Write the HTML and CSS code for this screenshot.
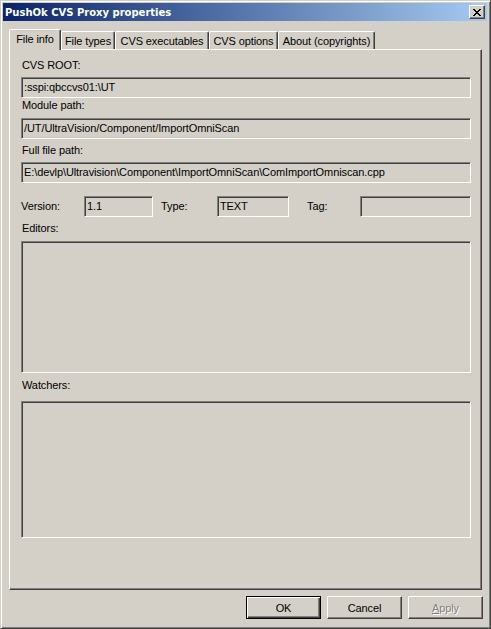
FILE: index.html
```html
<html>
<head>
<meta http-equiv="Content-Type" content="text/html; charset=UTF-8">
<title>PushOk CVS Proxy properties</title>
<link rel="stylesheet" href="styles.css">
</head>
<body>
<div class="window">
  <div class="caption">
    <span class="caption-text">PushOk CVS Proxy properties</span>
    <span class="caption-btn">
      <svg width="8" height="7" viewBox="0 0 8 7" shape-rendering="crispEdges">
        <path fill="#000" d="M0 0h2v1h-2z M6 0h2v1h-2z M1 1h2v1h-2z M5 1h2v1h-2z M2 2h4v1h-4z M3 3h2v1h-2z M2 4h4v1h-4z M1 5h2v1h-2z M5 5h2v1h-2z M0 6h2v1h-2z M6 6h2v1h-2z"/>
      </svg>
    </span>
  </div>

  <div class="tabs">
    <div class="tab active w1">File info</div>
    <div class="tab w2">File types</div>
    <div class="tab w3">CVS executables</div>
    <div class="tab w4">CVS options</div>
    <div class="tab w5">About (copyrights)</div>
  </div>

  <div class="sheet">
    <div class="label first">CVS ROOT:</div>
    <div class="edit e1">:sspi:qbccvs01:\UT</div>

    <div class="label l2">Module path:</div>
    <div class="edit e2">/UT/UltraVision/Component/ImportOmniScan</div>

    <div class="label l3">Full file path:</div>
    <div class="edit e3">E:\devlp\Ultravision\Component\ImportOmniScan\ComImportOmniscan.cpp</div>

    <div class="row">
      <span class="rlabel version">Version:</span>
      <span class="edit small ver">1.1</span>
      <span class="rlabel type">Type:</span>
      <span class="edit small typ">TEXT</span>
      <span class="rlabel tag">Tag:</span>
      <span class="edit small tg"></span>
    </div>

    <div class="label l4">Editors:</div>
    <div class="list editors"></div>

    <div class="label l5">Watchers:</div>
    <div class="list watchers"></div>
  </div>

  <div class="buttons">
    <div class="btn default">OK</div>
    <div class="btn">Cancel</div>
    <div class="btn disabled"><u>A</u>pply</div>
  </div>
</div>
</body>
</html>
```

FILE: styles.css
```css
BODY
{
  margin: 0;
  padding: 0;
  background: #d4d0c8;
  font-family: "Liberation Sans", Arial, sans-serif;
  font-size: 11px;
  letter-spacing: -0.1px;
  color: #000;
}

/* outer dialog frame */
.window {
  box-sizing: border-box;
  width: 491px;
  height: 629px;
  padding: 2px;
  background: #d4d0c8;
  border: 1px solid;
  border-color: #d4d0c8 #404040 #404040 #d4d0c8;
  box-shadow: inset 1px 1px #fff, inset -1px -1px #808080;
}

/* title bar */
.caption {
  height: 18px;
  display: flex;
  align-items: center;
  justify-content: space-between;
  padding: 0 2px 0 2px;
  margin-right: 1px;
  background: linear-gradient(to right, #0a246a, #a6caf0);
}
.caption-text {
  color: #fff;
  font-family: "DejaVu Sans", Verdana, sans-serif;
  font-weight: bold;
  font-size: 10px;
  letter-spacing: 0;
}
.caption-btn {
  box-sizing: border-box;
  width: 16px;
  height: 14px;
  display: flex;
  align-items: center;
  justify-content: center;
  background: #d4d0c8;
  border: 1px solid;
  border-color: #fff #404040 #404040 #fff;
  box-shadow: inset -1px -1px #808080;
}

/* tab strip */
.tabs {
  display: flex;
  align-items: flex-start;
  margin: 8px 6px 0 6px;
  height: 20px;
  position: relative;
  z-index: 1;
}
.tab {
  box-sizing: border-box;
  height: 18px;
  margin-top: 2px;
  display: flex;
  align-items: center;
  justify-content: center;
  background: #d4d0c8;
  border-top: 1px solid #fff;
  border-left: 1px solid #fff;
  border-right: 1px solid #404040;
  box-shadow: inset -1px 0 #808080;
  border-radius: 2px 2px 0 0;
  white-space: nowrap;
}
.tab.active {
  height: 21px;
  margin-top: 0;
  padding-bottom: 3px;
}
.w1 { width: 52px; }
.w2 { width: 54px; }
.w3 { width: 94px; }
.w4 { width: 69px; }
.w5 { width: 97px; }

/* property page */
.sheet {
  box-sizing: border-box;
  height: 541px;
  margin: 0 6px;
  padding: 9px 10px 0 11px;
  border: 1px solid;
  border-color: #fff #404040 #404040 #fff;
  box-shadow: inset -1px -1px #808080;
}

.label {
  line-height: 13px;
  padding-left: 1px;
}
.l2 { margin-top: 1px; }
.l3 { margin-top: 5px; }
.l4 { margin-top: 5px; }
.l5 { margin-top: 6px; }

/* read-only edit boxes */
.edit {
  box-sizing: border-box;
  height: 21px;
  line-height: 19px;
  padding-left: 2px;
  border: 1px solid;
  border-color: #808080 #fff #fff #808080;
  box-shadow: inset 1px 1px #404040, inset -1px -1px #d4d0c8;
  white-space: nowrap;
  overflow: hidden;
}
.e1 { margin-top: 5px; }
.e2 { margin-top: 6px; }
.e3 { margin-top: 5px; }

.row {
  display: flex;
  align-items: center;
  margin-top: 13px;
  height: 21px;
}
.rlabel { line-height: 13px; }
.version { width: 63px; }
.type { width: 56px; margin-left: 8px; }
.tag { width: 53px; margin-left: 18px; }
.edit.small { display: block; }
.ver { width: 69px; }
.typ { width: 72px; }
.tg { width: 111px; }

.list {
  box-sizing: border-box;
  border: 1px solid;
  border-color: #808080 #fff #fff #808080;
  box-shadow: inset 1px 1px #404040, inset -1px -1px #d4d0c8;
}
.editors { height: 132px; margin-top: 6px; }
.watchers { height: 137px; margin-top: 9px; }

/* dialog buttons */
.buttons {
  display: flex;
  justify-content: flex-end;
  gap: 6px;
  margin-top: 6px;
  padding-right: 5px;
}
.btn {
  box-sizing: border-box;
  width: 75px;
  height: 23px;
  display: flex;
  align-items: center;
  justify-content: center;
  border: 1px solid;
  border-color: #fff #404040 #404040 #fff;
  box-shadow: inset -1px -1px #808080;
}
.btn.default {
  border-color: #000;
  box-shadow: inset 1px 1px #fff, inset -1px -1px #404040, inset -2px -2px #808080;
}
.btn.disabled {
  color: #808080;
  text-shadow: 1px 1px #fff;
}
```
